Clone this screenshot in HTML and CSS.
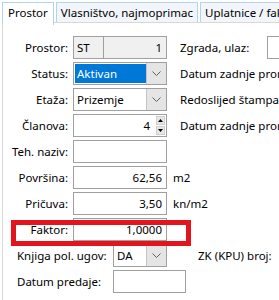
FILE: index.html
```html
<!DOCTYPE html>
<html lang="hr">
<head>
  <meta charset="UTF-8" />
  <title>Prostor</title>
  <link rel="stylesheet" href="styles.css">
</head>
<body>
  <div class="tabs">
    <div class="tab active">Prostor</div>
    <div class="tab">Vlasništvo, najmoprimac</div>
    <div class="tab">Uplatnice / fakture</div>
  </div>

  <div class="panel">
    <div class="row">
      <div class="left">
        <span class="lbl">Prostor:</span>
        <div class="ctl split">
          <span class="code">ST</span>
          <span class="num">1</span>
        </div>
      </div>
      <span class="rlbl">Zgrada, ulaz:</span>
      <div class="ctl rbox"></div>
    </div>

    <div class="row">
      <div class="left">
        <span class="lbl">Status:</span>
        <div class="ctl combo">
          <span class="val selected">Aktivan</span>
          <span class="drop"><svg width="9" height="5" viewBox="0 0 9 5"><path d="M0.5 0.5 L4.5 4.5 L8.5 0.5" fill="none" stroke="#606060" stroke-width="1"/></svg></span>
        </div>
      </div>
      <span class="rlbl">Datum zadnje promjene:</span>
    </div>

    <div class="row">
      <div class="left">
        <span class="lbl">Etaža:</span>
        <div class="ctl combo">
          <span class="val">Prizemje</span>
          <span class="drop"><svg width="9" height="5" viewBox="0 0 9 5"><path d="M0.5 0.5 L4.5 4.5 L8.5 0.5" fill="none" stroke="#606060" stroke-width="1"/></svg></span>
        </div>
      </div>
      <span class="rlbl">Redoslijed štampanja:</span>
    </div>

    <div class="row gap">
      <div class="left">
        <span class="lbl">Članova:</span>
        <div class="ctl spin">
          <span class="num">4</span>
          <span class="arrows">
            <span class="arr"><svg width="5" height="3" viewBox="0 0 5 3"><path d="M0 3 L2.5 0 L5 3 Z" fill="#000"/></svg></span>
            <span class="arr"><svg width="5" height="3" viewBox="0 0 5 3"><path d="M0 0 L2.5 3 L5 0 Z" fill="#000"/></svg></span>
          </span>
        </div>
      </div>
      <span class="rlbl">Datum zadnje promjene:</span>
    </div>

    <div class="row">
      <div class="left">
        <span class="lbl">Teh. naziv:</span>
        <div class="ctl"></div>
      </div>
    </div>

    <div class="row">
      <div class="left">
        <span class="lbl">Površina:</span>
        <div class="ctl"><span class="num">62,56</span></div>
        <span class="unit">m2</span>
      </div>
    </div>

    <div class="row">
      <div class="left">
        <span class="lbl">Pričuva:</span>
        <div class="ctl"><span class="num">3,50</span></div>
        <span class="unit">kn/m2</span>
      </div>
    </div>

    <div class="row">
      <div class="left">
        <span class="lbl">Faktor:</span>
        <div class="ctl"><span class="num">1,0000</span></div>
      </div>
    </div>

    <div class="row gap1">
      <div class="left">
        <span class="lbl wide">Knjiga pol. ugov:</span>
        <div class="ctl combo short">
          <span class="val">DA</span>
          <span class="drop"><svg width="9" height="5" viewBox="0 0 9 5"><path d="M0.5 0.5 L4.5 4.5 L8.5 0.5" fill="none" stroke="#606060" stroke-width="1"/></svg></span>
        </div>
      </div>
      <span class="rlbl zk">ZK (KPU) broj:</span>
    </div>

    <div class="row">
      <div class="left">
        <span class="lbl wide">Datum predaje:</span>
        <div class="ctl date"></div>
      </div>
    </div>
  </div>

  <div class="mark"></div>
</body>
</html>
```

FILE: styles.css
```css
body {
  margin: 0;
  width: 279px;
  height: 300px;
  overflow: hidden;
  background: #fff;
  color: #000;
  font-family: "Noto Sans", sans-serif;
  font-size: 11.5px;
  position: relative;
}
.tabs {
  display: flex;
  gap: 2px;
  padding: 2px 0 0 2px;
  height: 22px;
  box-sizing: border-box;
  white-space: nowrap;
}
.tab {
  border: 1px solid #b3d4ef;
  border-bottom: none;
  background: #f2f6fa;
  padding: 0 4px;
  line-height: 20px;
}
.tab.active {
  background: #fff;
  height: 22px;
  padding: 0 5px;
  position: relative;
  z-index: 1;
}
.panel {
  margin-left: 2px;
  border-left: 1px solid #d9d9d9;
  border-top: 1px solid #d9d9d9;
  padding-top: 13px;
  height: 278px;
  box-sizing: border-box;
  overflow: hidden;
}
.row {
  display: flex;
  align-items: center;
  height: 23px;
  margin-bottom: 3px;
  white-space: nowrap;
}
.row.gap {
  margin-top: 2px;
}
.row.gap1 {
  margin-top: 1px;
}
.left {
  width: 177px;
  flex: none;
  display: flex;
  align-items: center;
}
.lbl {
  width: 65px;
  margin-right: 5px;
  text-align: right;
  flex: none;
}
.lbl.wide {
  width: 110px;
  margin-right: 0;
  padding-left: 14px;
  box-sizing: border-box;
  text-align: left;
}
.ctl {
  width: 94px;
  height: 23px;
  box-sizing: border-box;
  border: 1px solid #a0a0a0;
  background: #fff;
  display: flex;
  align-items: center;
  flex: none;
}
.num {
  flex: 1;
  text-align: right;
  padding-right: 4px;
}
.split {
  background: #f0f0f0;
}
.split .code {
  width: 30px;
  height: 100%;
  line-height: 21px;
  padding-left: 3px;
  box-sizing: border-box;
  border-right: 1px solid #a0a0a0;
}
.combo .val {
  flex: 1;
  height: 100%;
  line-height: 21px;
  padding-left: 3px;
}
.combo .val.selected {
  background: #0078d7;
  color: #fff;
  margin: 1px 0 1px 1px;
  height: 19px;
  line-height: 19px;
  padding-left: 2px;
}
.drop {
  width: 19px;
  height: 100%;
  background: #e5e5e5;
  border-left: 1px solid #c4c4c4;
  display: flex;
  align-items: center;
  justify-content: center;
}
.combo.short {
  width: 54px;
}
.spin .num {
  padding-right: 6px;
}
.arrows {
  display: flex;
  flex-direction: column;
  gap: 1px;
  margin-right: 1px;
}
.arr {
  width: 9px;
  height: 9px;
  background: #e6e6e6;
  border: 1px solid #d0d0d0;
  box-sizing: border-box;
  display: flex;
  align-items: center;
  justify-content: center;
}
.unit {
  margin-left: 6px;
}
.rbox {
  margin-left: 18px;
  width: 30px;
}
.rlbl.zk {
  margin-left: 18px;
}
.date {
  width: 73px;
}
.mark {
  position: absolute;
  left: 11px;
  top: 220px;
  width: 180px;
  height: 26px;
  box-sizing: border-box;
  border: 5px solid #e3141c;
}
```
